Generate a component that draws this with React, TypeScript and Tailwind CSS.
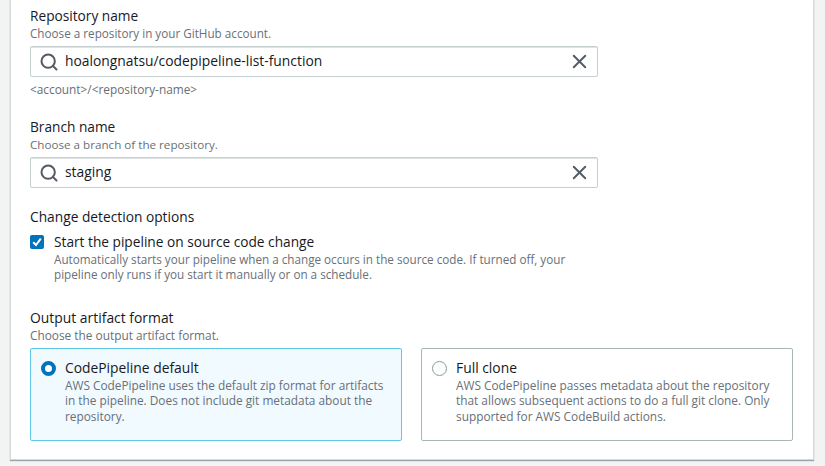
import { Search, X } from 'lucide-react';

const font = "font-['Open_Sans',sans-serif]";

const SearchInput = ({ value }: { value: string }) => (
  <div className="flex h-[31px] w-[568px] items-center rounded-[2px] border border-[#c6d0d0] bg-white pl-[8px] pr-[6px] shadow-[inset_0_1px_0_#dfe5e5]">
    <Search size={20} strokeWidth={2.4} className="text-[#545b64]" />
    <span className="ml-[6px] flex-1 text-[13.85px] text-[#16191f]">{value}</span>
    <X size={23} strokeWidth={2} className="text-[#545b64]" />
  </div>
);

const Tile = ({ title, text, selected }: { title: string; text: string[]; selected?: boolean }) => (
  <div
    className={`flex h-[93px] w-[372px] gap-[9px] rounded-[2px] border pl-[10px] pt-[10px] ${
      selected ? 'border-[#5fc8e4] bg-[#f1faff]' : 'border-[#aab7b8] bg-white'
    }`}
  >
    {selected ? (
      <div className="mt-[2px] size-[15px] rounded-full border-[4px] border-[#0073bb] bg-white" />
    ) : (
      <div className="mt-[2px] size-[15px] rounded-full border border-[#8a9a9b] bg-white" />
    )}
    <div className="-mt-[1px] flex flex-col">
      <div className="text-[13.85px] leading-[20px] text-[#16191f]">{title}</div>
      <p className="text-[11.85px] leading-[15.3px] text-[#687078]">
        {text[0]}
        <br />
        {text[1]}
        <br />
        {text[2]}
      </p>
    </div>
  </div>
);

const App = () => {
  return (
    <div className={`h-[466px] w-[825px] overflow-hidden bg-[#f2f3f3] pl-[10px] ${font}`}>
      <div className="flex h-[460px] w-[804px] flex-col border-r border-b border-l border-[#d5dbdb] bg-white pl-[19px] pt-[6px] shadow-[0_1px_1px_#9aa3a8]">
        <div className="text-[13.7px] leading-[20px] text-[#16191f]">Repository name</div>
        <div className="mb-[5px] text-[11.7px] leading-[15px] text-[#687078]">Choose a repository in your GitHub account.</div>
        <SearchInput value="hoalongnatsu/codepipeline-list-function" />
        <div className="mt-[4px] text-[11.85px] leading-[16px] text-[#687078]">&lt;account&gt;/&lt;repository-name&gt;</div>

        <div className="mt-[20px] text-[13.7px] leading-[20px] text-[#16191f]">Branch name</div>
        <div className="mb-[5px] text-[11.65px] leading-[15px] text-[#687078]">Choose a branch of the repository.</div>
        <div className="-mb-[1px]">
          <SearchInput value="staging" />
        </div>

        <div className="mt-[20px] text-[13.75px] leading-[20px] text-[#16191f]">Change detection options</div>
        <div className="mt-[5px] flex gap-[10px]">
          <div className="mt-[3px] flex size-[14px] items-center justify-center rounded-[2px] bg-[#0073bb]">
            <svg width="10" height="10" viewBox="0 0 10 10" fill="none" stroke="white" strokeWidth="2">
              <path d="M1.2 5.2 L4 8 L8.8 1.6" />
            </svg>
          </div>
          <div className="flex flex-col">
            <div className="text-[13.7px] leading-[20px] text-[#16191f]">Start the pipeline on source code change</div>
            <p className="text-[11.7px] leading-[15px] text-[#687078]">
              Automatically starts your pipeline when a change occurs in the source code. If turned off, your
              <br />
              pipeline only runs if you start it manually or on a schedule.
            </p>
          </div>
        </div>

        <div className="mt-[26px] text-[13.9px] leading-[20px] text-[#16191f]">Output artifact format</div>
        <div className="mb-[5px] text-[11.85px] leading-[15px] text-[#687078]">Choose the output artifact format.</div>
        <div className="flex gap-[19px]">
          <Tile
            selected
            title="CodePipeline default"
            text={[
              'AWS CodePipeline uses the default zip format for artifacts',
              'in the pipeline. Does not include git metadata about the',
              'repository.',
            ]}
          />
          <Tile
            title="Full clone"
            text={[
              'AWS CodePipeline passes metadata about the repository',
              'that allows subsequent actions to do a full git clone. Only',
              'supported for AWS CodeBuild actions.',
            ]}
          />
        </div>
      </div>
    </div>
  );
};

export default App;
